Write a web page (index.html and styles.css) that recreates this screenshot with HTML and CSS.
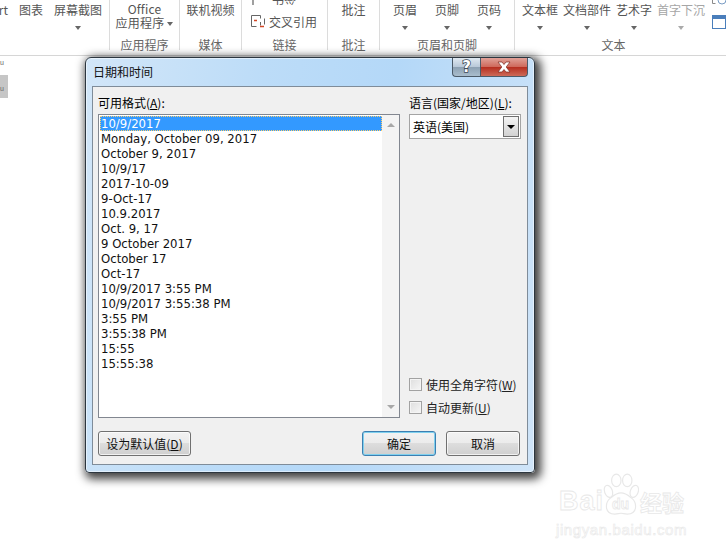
FILE: index.html
```html
<!DOCTYPE html>
<html lang="zh-CN">
<head>
<meta charset="utf-8">
<title>日期和时间</title>
<link rel="stylesheet" href="styles.css">
</head>
<body>
<div class="page">
  <header class="ribbon">
    <section class="group g-illus">
      <div class="tools tools-illus">
        <div class="tool t-rt">rt</div>
        <div class="tool">图表</div>
        <div class="tool">屏幕截图<i class="caret"></i></div>
      </div>
      <div class="glabel"></div>
    </section>
    <section class="group g-apps">
      <div class="tools tools-center"><div class="tool stack">Office<span class="inline">应用程序<i class="caret"></i></span></div></div>
      <div class="glabel">应用程序</div>
    </section>
    <section class="group g-media">
      <div class="tools tools-center"><div class="tool">联机视频</div></div>
      <div class="glabel">媒体</div>
    </section>
    <section class="group g-links">
      <div class="tools links">
        <div class="clip-row"><svg class="bm" width="12" height="6" viewBox="0 0 12 6"><path d="M3 0v6" stroke="#777" stroke-width="1.400"/><path d="M3 .5h4" stroke="#d24726"/></svg><span class="clipped">书签</span></div>
        <div class="xref"><svg width="16" height="16" viewBox="0 0 16 16"><path d="M1.500 1.500h9v3M10.500 8v3.500M1.500 1.500v11h5" fill="none" stroke="#666"/><path d="M4 6.500h3M10 12.500h4" stroke="#d24726" stroke-width="1.500"/><path d="M14.500 4.500v6" stroke="#666"/></svg><span>交叉引用</span></div>
      </div>
      <div class="glabel">链接</div>
    </section>
    <section class="group g-comment">
      <div class="tools tools-center"><div class="tool">批注</div></div>
      <div class="glabel">批注</div>
    </section>
    <section class="group g-hf">
      <div class="tools tools-hf">
        <div class="tool">页眉<i class="caret"></i></div>
        <div class="tool">页脚<i class="caret"></i></div>
        <div class="tool">页码<i class="caret"></i></div>
      </div>
      <div class="glabel">页眉和页脚</div>
    </section>
    <section class="group g-text">
      <div class="tools tools-text">
        <div class="tool">文本框<i class="caret"></i></div>
        <div class="tool">文档部件<i class="caret"></i></div>
        <div class="tool">艺术字<i class="caret"></i></div>
        <div class="tool off">首字下沉<i class="caret"></i></div>
      </div>
      <div class="glabel">文本</div>
    </section>
    <div class="stub">
      <svg class="stub-top" width="14" height="5" viewBox="0 0 14 5"><path d="M.5 0v3.500h3" fill="none" stroke="#8a8a8a"/><circle cx="10" cy="0" r="4" fill="none" stroke="#7a9cc4"/></svg>
      <span class="stub-box"></span>
    </div>
  </header>

  <aside class="ruler">
    <span class="rmark">u</span>
    <span class="rbox">u</span>
  </aside>

  <div class="dialog">
    <div class="titlebar">
      <span class="title">日期和时间</span>
      <div class="winbtns">
        <span class="wb help">?</span>
        <span class="wb close">
          <svg width="18" height="12" viewBox="0 0 18 12"><path d="M3 1h4l2 2.500L11 1h4l-3.800 5L15 11h-4L9 8.500 7 11H3l3.800-5z" fill="#fff" stroke="#7d2a20" stroke-width=".7"/></svg>
        </span>
      </div>
    </div>
    <div class="panel">
      <div class="columns">
        <div class="left">
          <label class="lbl">可用格式(<u>A</u>):</label>
          <div class="listbox">
            <ul class="items">
              <li class="sel">10/9/2017</li>
              <li>Monday, October 09, 2017</li>
              <li>October 9, 2017</li>
              <li>10/9/17</li>
              <li>2017-10-09</li>
              <li>9-Oct-17</li>
              <li>10.9.2017</li>
              <li>Oct. 9, 17</li>
              <li>9 October 2017</li>
              <li>October 17</li>
              <li>Oct-17</li>
              <li>10/9/2017 3:55 PM</li>
              <li>10/9/2017 3:55:38 PM</li>
              <li>3:55 PM</li>
              <li>3:55:38 PM</li>
              <li>15:55</li>
              <li>15:55:38</li>
            </ul>
            <div class="scroll">
              <i class="arr up"></i>
              <i class="arr down"></i>
            </div>
          </div>
        </div>
        <div class="right">
          <label class="lbl">语言(国家/地区)(<u>L</u>):</label>
          <div class="combo"><span class="combo-val">英语(美国)</span><span class="combo-btn"><i class="blk"></i></span></div>
          <div class="checks">
            <div class="chk"><i class="box"></i><span>使用全角字符(<u>W</u>)</span></div>
            <div class="chk"><i class="box"></i><span>自动更新(<u>U</u>)</span></div>
          </div>
        </div>
      </div>
      <div class="actions">
        <button class="btn wide">设为默认值(<u>D</u>)</button>
        <div class="spacer"></div>
        <button class="btn ok">确定</button>
        <button class="btn">取消</button>
      </div>
    </div>
  </div>

  <div class="wm">
    <div class="wm-top">
      <span class="wm-bai">Bai</span>
      <span class="wm-paw">
        <svg width="36" height="43" viewBox="0 0 46 54" fill="#fff" stroke="#e8e8e8" stroke-width="1.500">
          <ellipse cx="7" cy="23" rx="5" ry="8" transform="rotate(-20 7 23)"/>
          <ellipse cx="17" cy="9" rx="6" ry="8"/>
          <ellipse cx="31" cy="9" rx="6" ry="8"/>
          <ellipse cx="40" cy="23" rx="5" ry="8" transform="rotate(20 40 23)"/>
          <path d="M23 25c6 0 9 3 14 7 6 5 8 20-6 20-4 0-5-1-8-1s-4 1-8 1c-14 0-12-15-6-20 5-4 8-7 14-7z"/>
        </svg>
        <span class="wm-du">du</span>
      </span>
      <span class="wm-cn">经验</span>
    </div>
    <div class="wm-url">jingyan.baidu.com</div>
  </div>
</div>
</body>
</html>
```
FILE: styles.css
```css
* { box-sizing: border-box; }
html, body { margin: 0; padding: 0; }
body { background: #fff; font-family: "DejaVu Sans", "Noto Sans CJK SC", sans-serif; color: #000; }
.page { position: relative; width: 726px; height: 551px; overflow: hidden; background: #fff; }

/* ribbon */
.ribbon { display: flex; height: 56px; border-bottom: 1px solid #d6d6d6; font-family: "Noto Sans CJK SC", sans-serif; font-size: 12px; color: #555; overflow: hidden; }
.group { display: flex; flex-direction: column; border-right: 1px solid #dcdcdc; height: 50px; flex: none; }
.g-illus { width: 110px; }
.g-apps { width: 70px; }
.g-media { width: 62px; }
.g-links { width: 86px; }
.g-comment { width: 52px; }
.g-hf { width: 135px; }
.g-text { width: 197px; border-right: none; }
.tools { flex: none; height: 37px; display: flex; padding-top: 2px; }
.tools-illus { gap: 11px; }
.tools-center { justify-content: center; }
.tools-hf { gap: 18px; padding-left: 13px; }
.tools-text { gap: 5px; padding-left: 7px; }
.tool { display: flex; flex-direction: column; align-items: center; line-height: 16px; white-space: nowrap; }
.t-rt { width: 8px; align-items: flex-end; }
.caret { display: block; width: 0; height: 0; border: 3px solid transparent; border-top: 4px solid #666; border-bottom: 0; margin-top: 8px; }
.stack { line-height: 14px; letter-spacing: .2px; }
.inline { display: flex; align-items: center; }
.inline .caret { margin: 1px 0 0 3px; }
.off { color: #a6a6a6; }
.off .caret { border-top-color: #aaa; }
.glabel { text-align: center; line-height: 16px; color: #666; height: 16px; }
.links { flex-direction: column; padding: 0 0 0 8px; }
.clip-row { height: 5px; overflow: hidden; display: flex; align-items: flex-end; gap: 10px; line-height: 14px; }
.clipped { display: block; height: 5px; line-height: 0; }
.bm { flex: none; }
.xref { display: flex; align-items: center; gap: 3px; margin-top: 9px; line-height: 16px; }
.stub { flex: none; width: 14px; display: flex; flex-direction: column; }
.stub-top { display: block; flex: none; }
.stub-box { display: block; width: 14px; height: 14px; margin-top: 10px; border: 1px solid #4a7ebb; border-top: 4px solid #4a7ebb; }

/* left stub */
.ruler { display: flex; flex-direction: column; align-items: flex-start; width: 8px; padding-top: 2px; font-family: "Liberation Sans", sans-serif; font-size: 7px; color: #666; }
.rmark { height: 17px; line-height: 10px; }
.rbox { width: 8px; height: 23px; line-height: 28px; background: #c6c6c6; }

/* dialog */
.dialog { position: absolute; left: 85px; top: 57px; width: 450px; height: 416px; padding: 0 6px 7px; display: flex; flex-direction: column; border: 1px solid #2c363f; border-radius: 6px 6px 4px 4px; background: linear-gradient(100deg, #d2e6f8 0%, #bcdcf8 35%, #b4d8f8 60%, #cfe4f8 100%); box-shadow: 3px 3px 10px 3px rgba(0,0,0,.75), inset 0 0 0 1px rgba(255,255,255,.5); }
.titlebar { flex: none; height: 28px; display: flex; justify-content: space-between; font-family: "Noto Sans CJK SC", sans-serif; font-size: 12px; }
.title { line-height: 28px; padding-left: 1px; color: #111; }
.winbtns { display: flex; height: 19px; }
.wb { display: flex; align-items: center; justify-content: center; height: 19px; border: 1px solid #4b5a68; border-top: 0; }
.help { width: 28px; border-radius: 0 0 0 4px; border-right: 0; color: #fff; font: bold 15px "DejaVu Sans", sans-serif; -webkit-text-stroke: 1.5px #3d4a57; paint-order: stroke fill; background: linear-gradient(#dfe8f1 0%, #b8c8d8 50%, #8da1b3 52%, #a9bdcd 100%); }
.close { width: 48px; border-radius: 0 0 4px 0; background: linear-gradient(#e0a198 0%, #cf6a5c 48%, #b62f20 52%, #cd6a58 100%); }
.panel { flex: 1; min-height: 0; display: flex; flex-direction: column; background: #f0f0f0; border: 1px solid #7f8c99; padding: 8px 7px 8px 5px; font-size: 12px; }
.columns { flex: 1; min-height: 0; display: flex; gap: 9px; }
.left { width: 302px; display: flex; flex-direction: column; }
.right { flex: 1; display: flex; flex-direction: column; }
.lbl { display: block; height: 19px; line-height: 16px; font-family: "Noto Sans CJK SC", sans-serif; font-size: 12px; }
.listbox { width: 302px; height: 304px; display: flex; background: #fff; border: 1px solid #828790; }
.items { list-style: none; flex: 1; margin: 0; padding: 1px 0 0 1px; font-size: 11.7px; }
.items li { height: 15px; line-height: 16px; padding-left: 1px; white-space: nowrap; color: #111; }
.items .sel { background: #3399ff; color: #fff; outline: 1px dotted #ffce6a; outline-offset: -1px; }
.scroll { flex: none; width: 17px; display: flex; flex-direction: column; justify-content: space-between; align-items: center; padding: 8px 0; background: #f4f4f4; }
.arr { display: block; width: 0; height: 0; border: 4px solid transparent; }
.up { border-top: 0; border-bottom: 4px solid #a8a8a8; }
.down { border-bottom: 0; border-top: 4px solid #a8a8a8; }
.combo { width: 112px; height: 25px; display: flex; align-items: center; justify-content: space-between; background: #fff; border: 1px solid #a4a4a4; padding: 1px; font-family: "Noto Sans CJK SC", sans-serif; }
.combo-val { padding-left: 2px; line-height: 16px; }
.combo-btn { width: 16px; height: 21px; display: flex; align-items: center; justify-content: center; border: 1px solid #6f6f6f; background: linear-gradient(#f4f4f4, #d2d2d2); }
.blk { display: block; border: 4px solid transparent; border-top: 4px solid #000; border-bottom: 0; }
.checks { margin-top: auto; display: flex; flex-direction: column; gap: 6px; padding-bottom: 2px; }
.chk { display: flex; align-items: center; gap: 4px; height: 17px; font-family: "Noto Sans CJK SC", sans-serif; color: #222; }
.box { display: block; flex: none; width: 13px; height: 13px; border: 1px solid #a2a2a2; background: linear-gradient(135deg, #dedede, #f6f6f6); box-shadow: inset 0 0 0 1px #f4f4f4; }
.actions { flex: none; height: 25px; margin-top: 13px; display: flex; gap: 10px; }
.spacer { flex: 1; }
.btn { width: 74px; height: 25px; padding: 0; font-family: "Noto Sans CJK SC", sans-serif; font-size: 12px; color: #111; border: 1px solid #707070; border-radius: 3px; background: linear-gradient(#f2f2f2 0%, #ebebeb 49%, #dddddd 50%, #cfcfcf 100%); box-shadow: inset 0 0 0 1px rgba(255,255,255,.7); }
.wide { width: 93px; }
.ok { border-color: #3c7fb1; box-shadow: inset 0 0 0 1px #7fd0ee; }
u { text-underline-offset: 1px; }

/* watermark */
.wm { position: absolute; left: 556px; top: 473px; width: 140px; font-family: "Liberation Sans", sans-serif; color: #fff; -webkit-text-stroke: .8px #e8e8e8; }
.wm-top { display: flex; align-items: flex-end; height: 43px; padding-left: 3px; }
.wm-bai { font-size: 27px; line-height: 30px; font-weight: bold; width: 44px; letter-spacing: 1px; }
.wm-paw { position: relative; width: 37px; height: 43px; flex: none; }
.wm-du { position: absolute; left: 9px; top: 23px; font-size: 14px; line-height: 16px; font-weight: bold; }
.wm-cn { font-family: "Noto Sans CJK SC", sans-serif; font-size: 22px; line-height: 30px; font-weight: bold; white-space: nowrap; }
.wm-url { font-size: 15px; line-height: 18px; margin-top: 5px; letter-spacing: .6px; -webkit-text-stroke: .6px #e8e8e8; white-space: nowrap; }
```
